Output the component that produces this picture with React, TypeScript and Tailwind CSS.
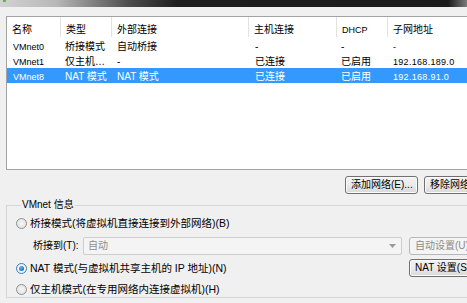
import React from 'react';

const columns = [
  { label: '名称', w: 'w-[54px]' },
  { label: '类型', w: 'w-[51px]' },
  { label: '外部连接', w: 'w-[137px]' },
  { label: '主机连接', w: 'w-[88px]' },
  { label: 'DHCP', w: 'w-[51px] text-[9px]' },
  { label: '子网地址', w: 'w-[120px]' },
];

const networks = [
  { name: 'VMnet0', type: '桥接模式', ext: '自动桥接', host: '-', dhcp: '-', subnet: '-' },
  { name: 'VMnet1', type: '仅主机…', ext: '-', host: '已连接', dhcp: '已启用', subnet: '192.168.189.0' },
  { name: 'VMnet8', type: 'NAT 模式', ext: 'NAT 模式', host: '已连接', dhcp: '已启用', subnet: '192.168.91.0', selected: true },
];

function Radio({ checked, label }: { checked?: boolean; label: string }) {
  return (
    <div className="flex items-center h-[16px]">
      <span
        className={
          'flex items-center justify-center w-[11px] h-[11px] rounded-full border shrink-0 ' +
          (checked
            ? 'border-[#3c7fb1] bg-[radial-gradient(circle,#ffffff_0%,#e6eef5_100%)]'
            : 'border-[#8e8f8f] bg-[radial-gradient(circle,#f7f7f7_0%,#dcdcdc_100%)]')
        }
      >
        {checked && <span className="w-[5px] h-[5px] rounded-full bg-[radial-gradient(circle_at_40%_35%,#6fb6f0_0%,#1b6ac6_70%,#134f96_100%)]" />}
      </span>
      <span className="ml-[3px] whitespace-nowrap text-[10.5px] leading-[12px]">{label}</span>
    </div>
  );
}

function WinButton({ children, disabled }: { children: React.ReactNode; disabled?: boolean }) {
  return (
    <button
      className={
        'h-[18px] w-[73px] shrink-0 rounded-[3px] border text-left pl-[5px] leading-[12px] whitespace-nowrap ' +
        (disabled
          ? 'border-[#b5b9bc] bg-[#f4f4f4] text-[#8b8b8b]'
          : 'border-[#707070] bg-gradient-to-b from-[#f2f2f2] via-[#ebebeb] to-[#d8d8d8] text-black shadow-[inset_0_0_0_1px_#fbfbfb]')
      }
    >
      {children}
    </button>
  );
}

export default function App() {
  return (
    <div className="relative w-[467px] h-[303px] overflow-hidden bg-[#f0f0f0] text-[10px] text-black font-['Liberation_Sans','Noto_Sans_CJK_SC',sans-serif]">
      {/* window title strip */}
      <div className="h-[7px] bg-[linear-gradient(to_right,#d2d2d2_0%,#b8b8b8_12%,#4a4a4a_28%,#1e1e1e_38%,#1c1c1c_96%,#7c7c7c_100%)]" />
      <span className="absolute left-[3px] top-0 w-[3px] h-[2px] bg-[#5dbb3a]" />

      {/* network list */}
      <div className="pl-[6px] pt-[9px]">
        <div className="w-[520px] h-[154px] border border-[#a3a3a3] bg-white">
          <div className="flex h-[20px]">
            {columns.map((c) => (
              <div key={c.label} className={c.w + ' shrink-0 border-r border-[#e2e2e2] pl-[5px] pt-[7px] leading-[12px] whitespace-nowrap'}>
                {c.label}
              </div>
            ))}
          </div>
          <div className="pt-[1px]">
            {networks.map((n) => (
              <div
                key={n.name}
                className={'flex h-[15px] items-center pt-[3px] leading-[12px] ' + (n.selected ? 'bg-[#3399ff] text-white' : '')}
              >
                <div className="w-[54px] shrink-0 pl-[6px] text-[9px]">{n.name}</div>
                <div className="w-[51px] shrink-0 pl-[4px] whitespace-nowrap">{n.type}</div>
                <div className="w-[137px] shrink-0 pl-[5px] whitespace-nowrap">{n.ext}</div>
                <div className="w-[88px] shrink-0 pl-[6px]">{n.host}</div>
                <div className="w-[51px] shrink-0 pl-[4px]">{n.dhcp}</div>
                <div className="w-[120px] shrink-0 pl-[5px] text-[9px] tracking-[0.3px]">{n.subnet}</div>
              </div>
            ))}
          </div>
        </div>
      </div>

      {/* add / remove */}
      <div className="flex gap-[6px] pl-[345px] mt-[6px]">
        <WinButton>添加网络(E)...</WinButton>
        <WinButton>移除网络(R)</WinButton>
      </div>

      {/* VMnet info group */}
      <fieldset className="ml-[6px] mt-[5px] w-[480px] border border-[#d5d5d5] pl-[9px]">
        <legend className="ml-[5px] px-[1px] leading-[12px]">VMnet 信息</legend>
        <div className="mt-[4px]">
          <Radio label="桥接模式(将虚拟机直接连接到外部网络)(B)" />
        </div>
        <div className="grid grid-cols-[386px_73px] gap-x-[7px] mt-[6px]">
          <div className="flex items-center h-[18px] pl-[17px]">
            <span className="w-[50px] shrink-0 leading-[12px] whitespace-nowrap">桥接到(T):</span>
            <div className="flex items-center justify-between w-[320px] h-[18px] border border-[#cdcdcd] rounded-[2px] bg-[#f4f4f4] pl-[4px] pr-[5px] text-[#8d8d8d] leading-[12px]">
              <span>自动</span>
              <svg width="7" height="4" viewBox="0 0 7 4">
                <path d="M0 0h7L3.5 4z" fill="#9a9a9a" />
              </svg>
            </div>
          </div>
          <WinButton disabled>自动设置(U)</WinButton>
        </div>
        <div className="grid grid-cols-[386px_73px] gap-x-[7px] mt-[4px]">
          <div className="flex items-center h-[18px]">
            <Radio checked label="NAT 模式(与虚拟机共享主机的 IP 地址)(N)" />
          </div>
          <WinButton>NAT 设置(S)</WinButton>
        </div>
        <div className="mt-[4px]">
          <Radio label="仅主机模式(在专用网络内连接虚拟机)(H)" />
        </div>
      </fieldset>
    </div>
  );
}
